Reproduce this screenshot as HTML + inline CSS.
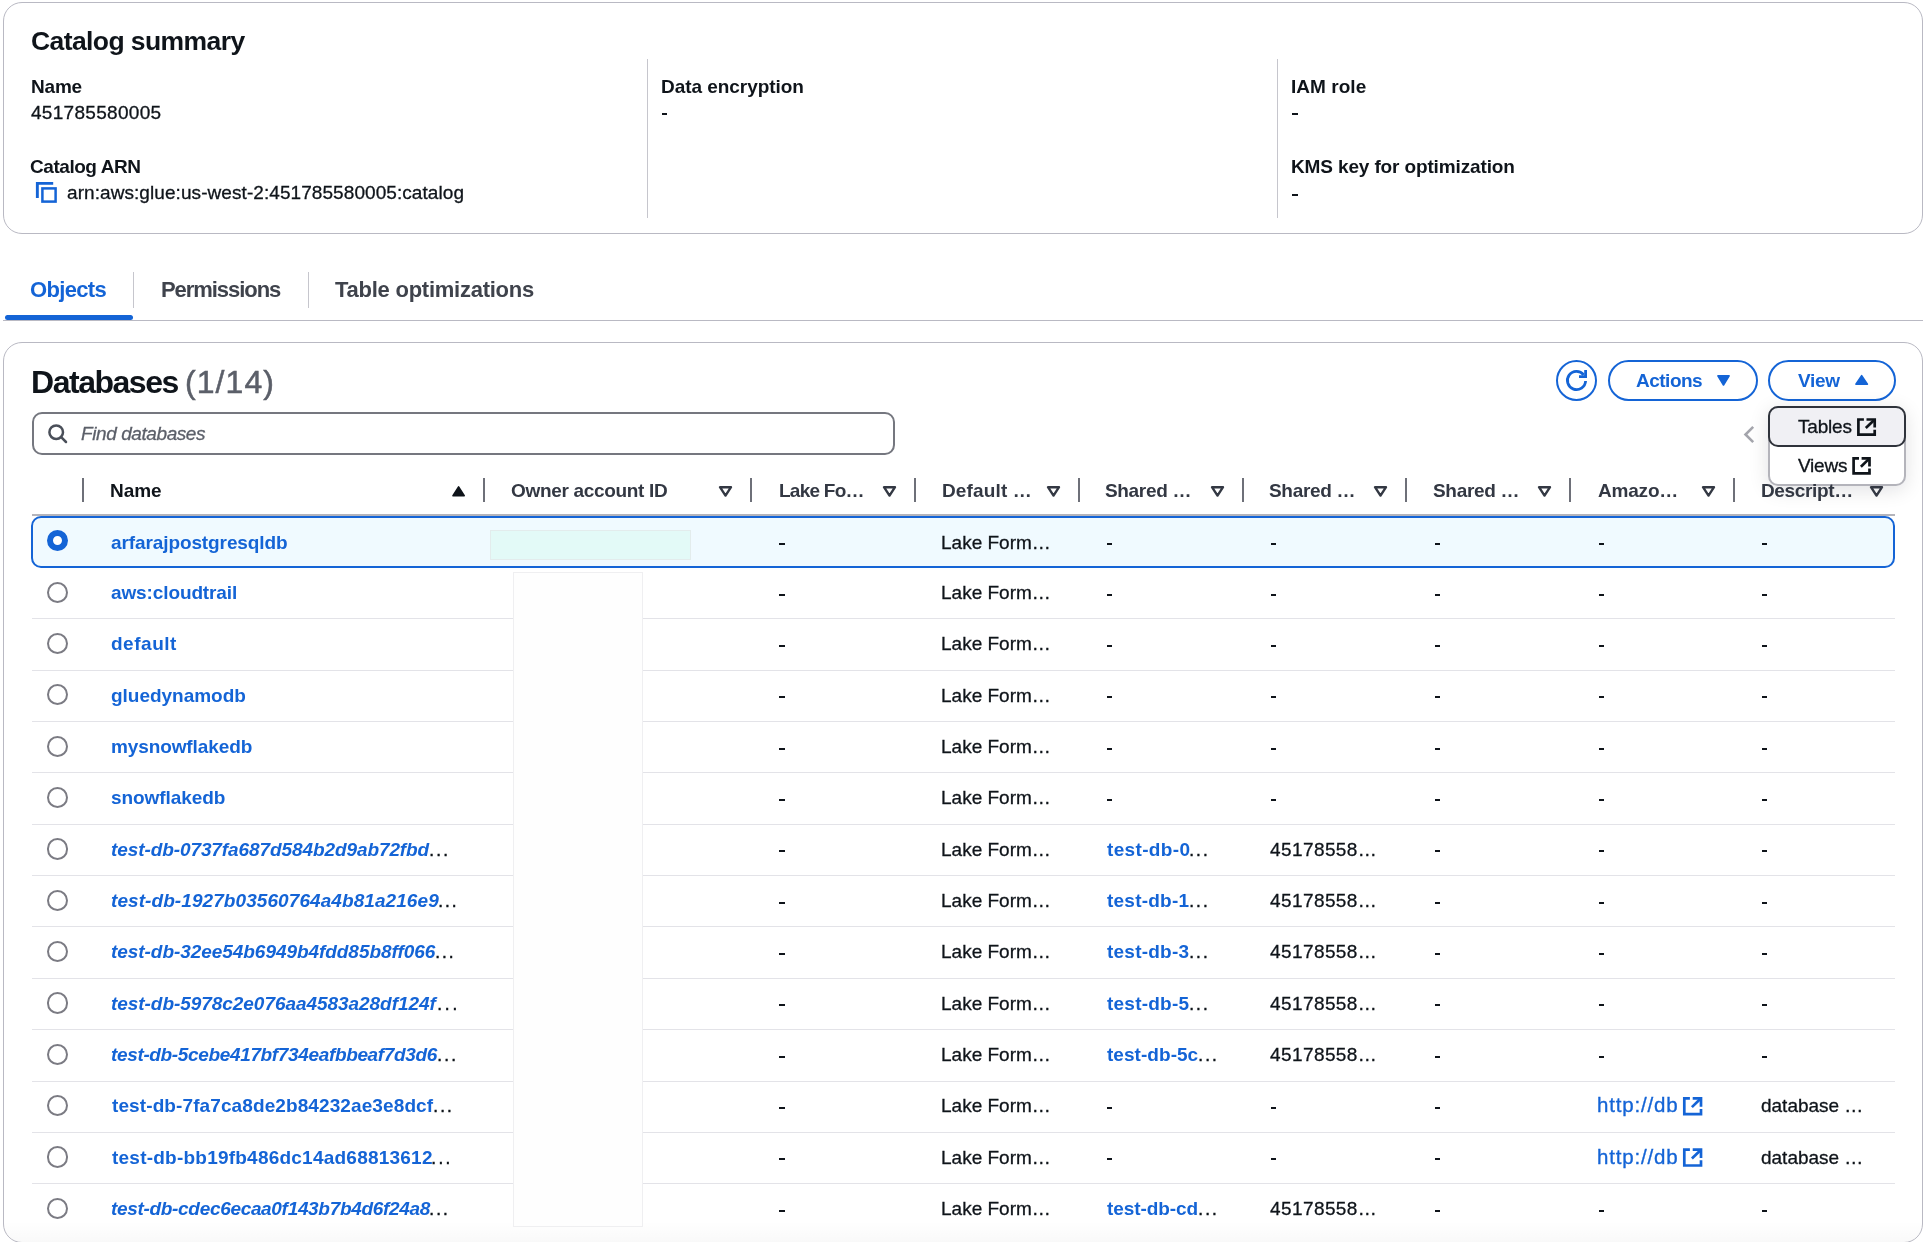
<!DOCTYPE html>
<html><head><meta charset="utf-8"><style>
html,body{margin:0;padding:0;background:#fff;width:1926px;height:1242px;overflow:hidden;position:relative}
span{position:absolute;white-space:pre;font-family:'Liberation Sans', sans-serif;will-change:transform}
</style></head><body>
<div style="position:absolute;left:3px;top:2px;width:1918px;height:230px;border:1px solid #b9b9c3;border-radius:19px"></div>
<div style="position:absolute;left:647px;top:59px;width:1px;height:159px;background:#c6c6cd"></div>
<div style="position:absolute;left:1277px;top:59px;width:1px;height:159px;background:#c6c6cd"></div>
<div style="position:absolute;left:3px;top:320px;width:1920px;height:1px;background:#b9b9c3"></div>
<div style="position:absolute;left:5px;top:314.8px;width:127.7px;height:5px;background:#1464d6;border-radius:3px"></div>
<div style="position:absolute;left:133px;top:272px;width:1px;height:36px;background:#c6c6cd"></div>
<div style="position:absolute;left:308px;top:272px;width:1px;height:36px;background:#c6c6cd"></div>
<div style="position:absolute;left:3px;top:342px;width:1918px;height:899px;border:1px solid #b9b9c3;border-radius:19px"></div>
<div style="position:absolute;left:4px;top:1221px;width:1918px;height:21px;background:linear-gradient(to bottom,rgba(0,0,0,0),rgba(0,0,0,0.022));border-radius:0 0 18px 18px"></div>
<div style="position:absolute;left:1556px;top:360px;width:37px;height:37px;border:2px solid #1464d6;border-radius:50%"></div>
<div style="position:absolute;left:1608px;top:360px;width:146px;height:37px;border:2px solid #1464d6;border-radius:21px"></div>
<div style="position:absolute;left:1768px;top:360px;width:124px;height:37px;border:2px solid #1464d6;border-radius:21px"></div>
<div style="position:absolute;left:31.5px;top:412.1px;width:859.3px;height:38.7px;border:2px solid #75777f;border-radius:10px"></div>
<div style="position:absolute;left:31px;top:516px;width:1860.3px;height:48px;border:2px solid #1464d6;border-radius:10px;background:#f0faff"></div>
<div style="position:absolute;left:32px;top:514px;width:1863px;height:1.5px;background:#b4b4bb"></div>
<div style="position:absolute;left:32px;top:618px;width:1863px;height:1px;background:#e3e3e8"></div>
<div style="position:absolute;left:32px;top:670px;width:1863px;height:1px;background:#e3e3e8"></div>
<div style="position:absolute;left:32px;top:721px;width:1863px;height:1px;background:#e3e3e8"></div>
<div style="position:absolute;left:32px;top:772px;width:1863px;height:1px;background:#e3e3e8"></div>
<div style="position:absolute;left:32px;top:824px;width:1863px;height:1px;background:#e3e3e8"></div>
<div style="position:absolute;left:32px;top:875px;width:1863px;height:1px;background:#e3e3e8"></div>
<div style="position:absolute;left:32px;top:926px;width:1863px;height:1px;background:#e3e3e8"></div>
<div style="position:absolute;left:32px;top:978px;width:1863px;height:1px;background:#e3e3e8"></div>
<div style="position:absolute;left:32px;top:1029px;width:1863px;height:1px;background:#e3e3e8"></div>
<div style="position:absolute;left:32px;top:1081px;width:1863px;height:1px;background:#e3e3e8"></div>
<div style="position:absolute;left:32px;top:1132px;width:1863px;height:1px;background:#e3e3e8"></div>
<div style="position:absolute;left:32px;top:1183px;width:1863px;height:1px;background:#e3e3e8"></div>
<div style="position:absolute;left:47px;top:529.80px;width:9.4px;height:9.4px;border:6px solid #1464d6;border-radius:50%;background:#fff"></div>
<div style="position:absolute;left:46.9px;top:581.50px;width:17.3px;height:17.3px;border:2.1px solid #7b7b83;border-radius:50%"></div>
<div style="position:absolute;left:46.9px;top:632.85px;width:17.3px;height:17.3px;border:2.1px solid #7b7b83;border-radius:50%"></div>
<div style="position:absolute;left:46.9px;top:684.20px;width:17.3px;height:17.3px;border:2.1px solid #7b7b83;border-radius:50%"></div>
<div style="position:absolute;left:46.9px;top:735.55px;width:17.3px;height:17.3px;border:2.1px solid #7b7b83;border-radius:50%"></div>
<div style="position:absolute;left:46.9px;top:786.90px;width:17.3px;height:17.3px;border:2.1px solid #7b7b83;border-radius:50%"></div>
<div style="position:absolute;left:46.9px;top:838.25px;width:17.3px;height:17.3px;border:2.1px solid #7b7b83;border-radius:50%"></div>
<div style="position:absolute;left:46.9px;top:889.60px;width:17.3px;height:17.3px;border:2.1px solid #7b7b83;border-radius:50%"></div>
<div style="position:absolute;left:46.9px;top:940.95px;width:17.3px;height:17.3px;border:2.1px solid #7b7b83;border-radius:50%"></div>
<div style="position:absolute;left:46.9px;top:992.30px;width:17.3px;height:17.3px;border:2.1px solid #7b7b83;border-radius:50%"></div>
<div style="position:absolute;left:46.9px;top:1043.65px;width:17.3px;height:17.3px;border:2.1px solid #7b7b83;border-radius:50%"></div>
<div style="position:absolute;left:46.9px;top:1095.00px;width:17.3px;height:17.3px;border:2.1px solid #7b7b83;border-radius:50%"></div>
<div style="position:absolute;left:46.9px;top:1146.35px;width:17.3px;height:17.3px;border:2.1px solid #7b7b83;border-radius:50%"></div>
<div style="position:absolute;left:46.9px;top:1197.70px;width:17.3px;height:17.3px;border:2.1px solid #7b7b83;border-radius:50%"></div>
<div style="position:absolute;left:82.1px;top:478px;width:2px;height:23.8px;background:#6e7079"></div>
<div style="position:absolute;left:483.0px;top:478px;width:2px;height:23.8px;background:#6e7079"></div>
<div style="position:absolute;left:750.0px;top:478px;width:2px;height:23.8px;background:#6e7079"></div>
<div style="position:absolute;left:914.0px;top:478px;width:2px;height:23.8px;background:#6e7079"></div>
<div style="position:absolute;left:1078.0px;top:478px;width:2px;height:23.8px;background:#6e7079"></div>
<div style="position:absolute;left:1242.0px;top:478px;width:2px;height:23.8px;background:#6e7079"></div>
<div style="position:absolute;left:1405.0px;top:478px;width:2px;height:23.8px;background:#6e7079"></div>
<div style="position:absolute;left:1569.0px;top:478px;width:2px;height:23.8px;background:#6e7079"></div>
<div style="position:absolute;left:1733.0px;top:478px;width:2px;height:23.8px;background:#6e7079"></div>
<div style="position:absolute;left:490.2px;top:529.5px;width:198.5px;height:28.7px;background:#e3faf7;border:1px solid #e3ecec"></div>
<div style="position:absolute;left:512.5px;top:571.5px;width:128.7px;height:653.7px;background:#fefefe;border:1.3px solid #efeff1"></div>
<div style="position:absolute;left:1768.3px;top:406.3px;width:133.3px;height:75.4px;border:2px solid #b4b4bb;border-radius:10px;background:#fff;box-shadow:0 4px 20px rgba(0,7,22,0.12)"></div>
<div style="position:absolute;left:1768.3px;top:406.3px;width:133.3px;height:36.6px;border:2px solid #2f333b;border-radius:10px;background:#f0f0f4"></div>
<div style="position:absolute;left:661.8px;top:113.3px;width:5.6px;height:2px;background:#0f141a"></div>
<div style="position:absolute;left:1292.2px;top:113.3px;width:5.6px;height:2px;background:#0f141a"></div>
<div style="position:absolute;left:1292.2px;top:193.5px;width:5.6px;height:2px;background:#0f141a"></div>
<div style="position:absolute;left:779.3px;top:543.1px;width:5.6px;height:2px;background:#0f141a"></div>
<div style="position:absolute;left:1106.9px;top:543.1px;width:5.6px;height:2px;background:#0f141a"></div>
<div style="position:absolute;left:1270.7px;top:543.1px;width:5.6px;height:2px;background:#0f141a"></div>
<div style="position:absolute;left:1434.7px;top:543.1px;width:5.6px;height:2px;background:#0f141a"></div>
<div style="position:absolute;left:1598.5px;top:543.1px;width:5.6px;height:2px;background:#0f141a"></div>
<div style="position:absolute;left:1761.8px;top:543.1px;width:5.6px;height:2px;background:#0f141a"></div>
<div style="position:absolute;left:779.3px;top:593.5px;width:5.6px;height:2px;background:#0f141a"></div>
<div style="position:absolute;left:1106.9px;top:593.5px;width:5.6px;height:2px;background:#0f141a"></div>
<div style="position:absolute;left:1270.7px;top:593.5px;width:5.6px;height:2px;background:#0f141a"></div>
<div style="position:absolute;left:1434.7px;top:593.5px;width:5.6px;height:2px;background:#0f141a"></div>
<div style="position:absolute;left:1598.5px;top:593.5px;width:5.6px;height:2px;background:#0f141a"></div>
<div style="position:absolute;left:1761.8px;top:593.5px;width:5.6px;height:2px;background:#0f141a"></div>
<div style="position:absolute;left:779.3px;top:644.9px;width:5.6px;height:2px;background:#0f141a"></div>
<div style="position:absolute;left:1106.9px;top:644.9px;width:5.6px;height:2px;background:#0f141a"></div>
<div style="position:absolute;left:1270.7px;top:644.9px;width:5.6px;height:2px;background:#0f141a"></div>
<div style="position:absolute;left:1434.7px;top:644.9px;width:5.6px;height:2px;background:#0f141a"></div>
<div style="position:absolute;left:1598.5px;top:644.9px;width:5.6px;height:2px;background:#0f141a"></div>
<div style="position:absolute;left:1761.8px;top:644.9px;width:5.6px;height:2px;background:#0f141a"></div>
<div style="position:absolute;left:779.3px;top:696.2px;width:5.6px;height:2px;background:#0f141a"></div>
<div style="position:absolute;left:1106.9px;top:696.2px;width:5.6px;height:2px;background:#0f141a"></div>
<div style="position:absolute;left:1270.7px;top:696.2px;width:5.6px;height:2px;background:#0f141a"></div>
<div style="position:absolute;left:1434.7px;top:696.2px;width:5.6px;height:2px;background:#0f141a"></div>
<div style="position:absolute;left:1598.5px;top:696.2px;width:5.6px;height:2px;background:#0f141a"></div>
<div style="position:absolute;left:1761.8px;top:696.2px;width:5.6px;height:2px;background:#0f141a"></div>
<div style="position:absolute;left:779.3px;top:747.6px;width:5.6px;height:2px;background:#0f141a"></div>
<div style="position:absolute;left:1106.9px;top:747.6px;width:5.6px;height:2px;background:#0f141a"></div>
<div style="position:absolute;left:1270.7px;top:747.6px;width:5.6px;height:2px;background:#0f141a"></div>
<div style="position:absolute;left:1434.7px;top:747.6px;width:5.6px;height:2px;background:#0f141a"></div>
<div style="position:absolute;left:1598.5px;top:747.6px;width:5.6px;height:2px;background:#0f141a"></div>
<div style="position:absolute;left:1761.8px;top:747.6px;width:5.6px;height:2px;background:#0f141a"></div>
<div style="position:absolute;left:779.3px;top:799.0px;width:5.6px;height:2px;background:#0f141a"></div>
<div style="position:absolute;left:1106.9px;top:799.0px;width:5.6px;height:2px;background:#0f141a"></div>
<div style="position:absolute;left:1270.7px;top:799.0px;width:5.6px;height:2px;background:#0f141a"></div>
<div style="position:absolute;left:1434.7px;top:799.0px;width:5.6px;height:2px;background:#0f141a"></div>
<div style="position:absolute;left:1598.5px;top:799.0px;width:5.6px;height:2px;background:#0f141a"></div>
<div style="position:absolute;left:1761.8px;top:799.0px;width:5.6px;height:2px;background:#0f141a"></div>
<div style="position:absolute;left:779.3px;top:850.3px;width:5.6px;height:2px;background:#0f141a"></div>
<div style="position:absolute;left:1434.7px;top:850.3px;width:5.6px;height:2px;background:#0f141a"></div>
<div style="position:absolute;left:1598.5px;top:850.3px;width:5.6px;height:2px;background:#0f141a"></div>
<div style="position:absolute;left:1761.8px;top:850.3px;width:5.6px;height:2px;background:#0f141a"></div>
<div style="position:absolute;left:779.3px;top:901.6px;width:5.6px;height:2px;background:#0f141a"></div>
<div style="position:absolute;left:1434.7px;top:901.6px;width:5.6px;height:2px;background:#0f141a"></div>
<div style="position:absolute;left:1598.5px;top:901.6px;width:5.6px;height:2px;background:#0f141a"></div>
<div style="position:absolute;left:1761.8px;top:901.6px;width:5.6px;height:2px;background:#0f141a"></div>
<div style="position:absolute;left:779.3px;top:953.0px;width:5.6px;height:2px;background:#0f141a"></div>
<div style="position:absolute;left:1434.7px;top:953.0px;width:5.6px;height:2px;background:#0f141a"></div>
<div style="position:absolute;left:1598.5px;top:953.0px;width:5.6px;height:2px;background:#0f141a"></div>
<div style="position:absolute;left:1761.8px;top:953.0px;width:5.6px;height:2px;background:#0f141a"></div>
<div style="position:absolute;left:779.3px;top:1004.3px;width:5.6px;height:2px;background:#0f141a"></div>
<div style="position:absolute;left:1434.7px;top:1004.3px;width:5.6px;height:2px;background:#0f141a"></div>
<div style="position:absolute;left:1598.5px;top:1004.3px;width:5.6px;height:2px;background:#0f141a"></div>
<div style="position:absolute;left:1761.8px;top:1004.3px;width:5.6px;height:2px;background:#0f141a"></div>
<div style="position:absolute;left:779.3px;top:1055.7px;width:5.6px;height:2px;background:#0f141a"></div>
<div style="position:absolute;left:1434.7px;top:1055.7px;width:5.6px;height:2px;background:#0f141a"></div>
<div style="position:absolute;left:1598.5px;top:1055.7px;width:5.6px;height:2px;background:#0f141a"></div>
<div style="position:absolute;left:1761.8px;top:1055.7px;width:5.6px;height:2px;background:#0f141a"></div>
<div style="position:absolute;left:779.3px;top:1107.0px;width:5.6px;height:2px;background:#0f141a"></div>
<div style="position:absolute;left:1106.9px;top:1107.0px;width:5.6px;height:2px;background:#0f141a"></div>
<div style="position:absolute;left:1270.7px;top:1107.0px;width:5.6px;height:2px;background:#0f141a"></div>
<div style="position:absolute;left:1434.7px;top:1107.0px;width:5.6px;height:2px;background:#0f141a"></div>
<div style="position:absolute;left:779.3px;top:1158.4px;width:5.6px;height:2px;background:#0f141a"></div>
<div style="position:absolute;left:1106.9px;top:1158.4px;width:5.6px;height:2px;background:#0f141a"></div>
<div style="position:absolute;left:1270.7px;top:1158.4px;width:5.6px;height:2px;background:#0f141a"></div>
<div style="position:absolute;left:1434.7px;top:1158.4px;width:5.6px;height:2px;background:#0f141a"></div>
<div style="position:absolute;left:779.3px;top:1209.8px;width:5.6px;height:2px;background:#0f141a"></div>
<div style="position:absolute;left:1434.7px;top:1209.8px;width:5.6px;height:2px;background:#0f141a"></div>
<div style="position:absolute;left:1598.5px;top:1209.8px;width:5.6px;height:2px;background:#0f141a"></div>
<div style="position:absolute;left:1761.8px;top:1209.8px;width:5.6px;height:2px;background:#0f141a"></div>
<svg style="position:absolute;left:0;top:0" width="1926" height="1242">
<path d="M37.35 197.9V183.35H53.2" fill="none" stroke="#1464d6" stroke-width="2.9"/>
<rect x="42.4" y="188.4" width="13.2" height="13.2" fill="none" stroke="#1464d6" stroke-width="2.5"/>
<path d="M1585.6 381 A9.1 9.1 0 1 1 1583.7 374.9" fill="none" stroke="#1464d6" stroke-width="2.8"/>
<path d="M1585.6 369.9V376.6H1579" fill="none" stroke="#1464d6" stroke-width="2.8"/>
<path d="M1717.9 375.9H1729.1L1723.5 385Z" fill="#1464d6" stroke="#1464d6" stroke-width="1.6" stroke-linejoin="round"/>
<path d="M1855.9 384.2H1867.4L1861.65 375.7Z" fill="#1464d6" stroke="#1464d6" stroke-width="1.6" stroke-linejoin="round"/>
<circle cx="56.2" cy="432.2" r="6.8" fill="none" stroke="#4a4f59" stroke-width="2.5"/>
<path d="M61.2 437.2L66 442" fill="none" stroke="#4a4f59" stroke-width="2.5" stroke-linecap="round"/>
<path d="M1753.2 426.8L1745.5 434.5L1753.2 442.2" fill="none" stroke="#a4a5ac" stroke-width="2.6"/>
<path d="M453 495.8H464.2L458.6 486.9Z" fill="#0f141a" stroke="#0f141a" stroke-width="1.6" stroke-linejoin="round"/>
<path d="M720.0 487.2H731.0L725.5 495.6Z" fill="none" stroke="#333843" stroke-width="2.4" stroke-linejoin="round"/>
<path d="M884.0 487.2H895.0L889.5 495.6Z" fill="none" stroke="#333843" stroke-width="2.4" stroke-linejoin="round"/>
<path d="M1048.0 487.2H1059.0L1053.5 495.6Z" fill="none" stroke="#333843" stroke-width="2.4" stroke-linejoin="round"/>
<path d="M1212.0 487.2H1223.0L1217.5 495.6Z" fill="none" stroke="#333843" stroke-width="2.4" stroke-linejoin="round"/>
<path d="M1375.0 487.2H1386.0L1380.5 495.6Z" fill="none" stroke="#333843" stroke-width="2.4" stroke-linejoin="round"/>
<path d="M1539.0 487.2H1550.0L1544.5 495.6Z" fill="none" stroke="#333843" stroke-width="2.4" stroke-linejoin="round"/>
<path d="M1703.0 487.2H1714.0L1708.5 495.6Z" fill="none" stroke="#333843" stroke-width="2.4" stroke-linejoin="round"/>
<path d="M1871.0 487.2H1882.0L1876.5 495.6Z" fill="none" stroke="#333843" stroke-width="2.4" stroke-linejoin="round"/>
<path d="M1863.9 419.5H1858.4V434.6H1874.7V429.7" fill="none" stroke="#0f141a" stroke-width="2.7"/><path d="M1866.5 419.5H1874.7V427.5" fill="none" stroke="#0f141a" stroke-width="2.7"/><path d="M1874.2 420.0L1865.8 427.9" fill="none" stroke="#0f141a" stroke-width="2.7"/>
<path d="M1859.0 458.4H1853.6V473.3H1869.5V468.5" fill="none" stroke="#0f141a" stroke-width="2.7"/><path d="M1861.6 458.4H1869.5V466.4" fill="none" stroke="#0f141a" stroke-width="2.7"/><path d="M1869.0 458.9L1860.9 466.7" fill="none" stroke="#0f141a" stroke-width="2.7"/>
<path d="M1689.9 1098.3H1684.3V1114.1H1701.0V1109.0" fill="none" stroke="#1464d6" stroke-width="2.7"/><path d="M1692.7 1098.3H1701.0V1106.8" fill="none" stroke="#1464d6" stroke-width="2.7"/><path d="M1700.5 1098.8L1691.9 1107.1" fill="none" stroke="#1464d6" stroke-width="2.7"/>
<path d="M1689.9 1149.7H1684.3V1165.5H1701.0V1160.3" fill="none" stroke="#1464d6" stroke-width="2.7"/><path d="M1692.7 1149.7H1701.0V1158.1" fill="none" stroke="#1464d6" stroke-width="2.7"/><path d="M1700.5 1150.2L1691.9 1158.5" fill="none" stroke="#1464d6" stroke-width="2.7"/>
</svg>
<span id="t0" style="left:31.40px;top:28.47px;font-size:26.5px;line-height:26.5px;font-weight:700;font-style:normal;color:#0f141a;letter-spacing:-0.586px">Catalog summary</span>
<span id="t1" style="left:30.80px;top:76.82px;font-size:19px;line-height:19px;font-weight:700;font-style:normal;color:#0f141a;letter-spacing:-0.200px">Name</span>
<span id="t2" style="left:31.00px;top:102.72px;font-size:19px;line-height:19px;font-weight:400;font-style:normal;color:#0f141a;letter-spacing:0.300px;-webkit-text-stroke:0.30px #0f141a">451785580005</span>
<span id="t3" style="left:30.00px;top:156.82px;font-size:19px;line-height:19px;font-weight:700;font-style:normal;color:#0f141a;letter-spacing:-0.450px">Catalog ARN</span>
<span id="t4" style="left:67.40px;top:182.92px;font-size:19px;line-height:19px;font-weight:400;font-style:normal;color:#0f141a;letter-spacing:0.071px;-webkit-text-stroke:0.30px #0f141a">arn:aws:glue:us-west-2:451785580005:catalog</span>
<span id="t5" style="left:660.60px;top:76.82px;font-size:19px;line-height:19px;font-weight:700;font-style:normal;color:#0f141a;letter-spacing:-0.050px">Data encryption</span>
<span id="t6" style="left:1291.40px;top:76.82px;font-size:19px;line-height:19px;font-weight:700;font-style:normal;color:#0f141a;letter-spacing:0.043px">IAM role</span>
<span id="t7" style="left:1291.40px;top:156.82px;font-size:19px;line-height:19px;font-weight:700;font-style:normal;color:#0f141a;letter-spacing:-0.135px">KMS key for optimization</span>
<span id="t8" style="left:30.00px;top:279.18px;font-size:22px;line-height:22px;font-weight:700;font-style:normal;color:#1464d6;letter-spacing:-0.667px">Objects</span>
<span id="t9" style="left:161.00px;top:279.18px;font-size:22px;line-height:22px;font-weight:700;font-style:normal;color:#3f434c;letter-spacing:-1.060px">Permissions</span>
<span id="t10" style="left:335.00px;top:279.18px;font-size:22px;line-height:22px;font-weight:700;font-style:normal;color:#3f434c;letter-spacing:-0.250px">Table optimizations</span>
<span id="t11" style="left:31.00px;top:365.81px;font-size:32px;line-height:32px;font-weight:700;font-style:normal;color:#0f141a;letter-spacing:-1.475px">Databases</span>
<span id="t12" style="left:185.00px;top:365.81px;font-size:32px;line-height:32px;font-weight:400;font-style:normal;color:#5b5f69;letter-spacing:1.080px;-webkit-text-stroke:0.51px #5b5f69">(1/14)</span>
<span id="t13" style="left:80.80px;top:423.92px;font-size:19px;line-height:19px;font-weight:400;font-style:italic;color:#5b5f69;letter-spacing:-0.415px;-webkit-text-stroke:0.30px #5b5f69">Find databases</span>
<span id="t14" style="left:1635.80px;top:371.12px;font-size:19px;line-height:19px;font-weight:700;font-style:normal;color:#1464d6;letter-spacing:-0.500px">Actions</span>
<span id="t15" style="left:1797.80px;top:371.02px;font-size:19px;line-height:19px;font-weight:700;font-style:normal;color:#1464d6;letter-spacing:-0.267px">View</span>
<span id="t16" style="left:1797.80px;top:416.72px;font-size:19px;line-height:19px;font-weight:400;font-style:normal;color:#0f141a;letter-spacing:-0.200px;-webkit-text-stroke:0.30px #0f141a">Tables</span>
<span id="t17" style="left:1797.80px;top:455.62px;font-size:19px;line-height:19px;font-weight:400;font-style:normal;color:#0f141a;letter-spacing:-0.225px;-webkit-text-stroke:0.30px #0f141a">Views</span>
<span id="t18" style="left:110.20px;top:480.92px;font-size:19px;line-height:19px;font-weight:700;font-style:normal;color:#0f141a;letter-spacing:-0.033px">Name</span>
<span id="t19" style="left:511.20px;top:480.92px;font-size:19px;line-height:19px;font-weight:700;font-style:normal;color:#333843;letter-spacing:-0.320px">Owner account ID</span>
<span id="t20" style="left:779.00px;top:480.92px;font-size:19px;line-height:19px;font-weight:700;font-style:normal;color:#333843;letter-spacing:-0.743px">Lake Fo…</span>
<span id="t21" style="left:942.00px;top:480.92px;font-size:19px;line-height:19px;font-weight:700;font-style:normal;color:#333843;letter-spacing:0.150px">Default …</span>
<span id="t22" style="left:1105.20px;top:480.92px;font-size:19px;line-height:19px;font-weight:700;font-style:normal;color:#333843;letter-spacing:-0.329px">Shared …</span>
<span id="t23" style="left:1269.40px;top:480.92px;font-size:19px;line-height:19px;font-weight:700;font-style:normal;color:#333843;letter-spacing:-0.314px">Shared …</span>
<span id="t24" style="left:1433.00px;top:480.92px;font-size:19px;line-height:19px;font-weight:700;font-style:normal;color:#333843;letter-spacing:-0.314px">Shared …</span>
<span id="t25" style="left:1597.80px;top:480.92px;font-size:19px;line-height:19px;font-weight:700;font-style:normal;color:#333843;letter-spacing:-0.200px">Amazo…</span>
<span id="t26" style="left:1761.00px;top:480.92px;font-size:19px;line-height:19px;font-weight:700;font-style:normal;color:#333843;letter-spacing:-0.350px">Descript…</span>
<span id="t27" style="left:110.60px;top:532.52px;font-size:19px;line-height:19px;font-weight:700;font-style:normal;color:#1464d6;letter-spacing:-0.100px">arfarajpostgresqldb</span>
<span id="t28" style="left:940.60px;top:532.52px;font-size:19px;line-height:19px;font-weight:400;font-style:normal;color:#0f141a;letter-spacing:0.000px;-webkit-text-stroke:0.30px #0f141a">Lake Form…</span>
<span id="t29" style="left:110.60px;top:582.97px;font-size:19px;line-height:19px;font-weight:700;font-style:normal;color:#1464d6;letter-spacing:-0.115px">aws:cloudtrail</span>
<span id="t30" style="left:940.60px;top:582.97px;font-size:19px;line-height:19px;font-weight:400;font-style:normal;color:#0f141a;letter-spacing:0.000px;-webkit-text-stroke:0.30px #0f141a">Lake Form…</span>
<span id="t31" style="left:110.60px;top:634.32px;font-size:19px;line-height:19px;font-weight:700;font-style:normal;color:#1464d6;letter-spacing:0.517px">default</span>
<span id="t32" style="left:940.60px;top:634.32px;font-size:19px;line-height:19px;font-weight:400;font-style:normal;color:#0f141a;letter-spacing:0.000px;-webkit-text-stroke:0.30px #0f141a">Lake Form…</span>
<span id="t33" style="left:110.60px;top:685.67px;font-size:19px;line-height:19px;font-weight:700;font-style:normal;color:#1464d6;letter-spacing:-0.027px">gluedynamodb</span>
<span id="t34" style="left:940.60px;top:685.67px;font-size:19px;line-height:19px;font-weight:400;font-style:normal;color:#0f141a;letter-spacing:0.000px;-webkit-text-stroke:0.30px #0f141a">Lake Form…</span>
<span id="t35" style="left:110.60px;top:737.02px;font-size:19px;line-height:19px;font-weight:700;font-style:normal;color:#1464d6;letter-spacing:-0.108px">mysnowflakedb</span>
<span id="t36" style="left:940.60px;top:737.02px;font-size:19px;line-height:19px;font-weight:400;font-style:normal;color:#0f141a;letter-spacing:0.000px;-webkit-text-stroke:0.30px #0f141a">Lake Form…</span>
<span id="t37" style="left:110.60px;top:788.37px;font-size:19px;line-height:19px;font-weight:700;font-style:normal;color:#1464d6;letter-spacing:-0.060px">snowflakedb</span>
<span id="t38" style="left:940.60px;top:788.37px;font-size:19px;line-height:19px;font-weight:400;font-style:normal;color:#0f141a;letter-spacing:0.000px;-webkit-text-stroke:0.30px #0f141a">Lake Form…</span>
<span id="t39" style="left:110.60px;top:839.72px;font-size:19px;line-height:19px;font-weight:700;font-style:italic;color:#1464d6;letter-spacing:-0.090px">test-db-0737fa687d584b2d9ab72fbd</span>
<span id="t40" style="left:429.00px;top:839.72px;font-size:19px;line-height:19px;font-weight:400;font-style:normal;color:#0f141a;letter-spacing:1.750px;-webkit-text-stroke:0.30px #0f141a">...</span>
<span id="t41" style="left:940.60px;top:839.72px;font-size:19px;line-height:19px;font-weight:400;font-style:normal;color:#0f141a;letter-spacing:0.000px;-webkit-text-stroke:0.30px #0f141a">Lake Form…</span>
<span id="t42" style="left:1106.80px;top:839.72px;font-size:19px;line-height:19px;font-weight:700;font-style:normal;color:#1464d6;letter-spacing:0.350px">test-db-0</span>
<span id="t43" style="left:1189.40px;top:839.72px;font-size:19px;line-height:19px;font-weight:400;font-style:normal;color:#0f141a;letter-spacing:1.550px;-webkit-text-stroke:0.30px #0f141a">...</span>
<span id="t44" style="left:1270.40px;top:839.72px;font-size:19px;line-height:19px;font-weight:400;font-style:normal;color:#0f141a;letter-spacing:0.412px;-webkit-text-stroke:0.30px #0f141a">45178558…</span>
<span id="t45" style="left:110.60px;top:891.07px;font-size:19px;line-height:19px;font-weight:700;font-style:italic;color:#1464d6;letter-spacing:0.077px">test-db-1927b03560764a4b81a216e9</span>
<span id="t46" style="left:438.40px;top:891.07px;font-size:19px;line-height:19px;font-weight:400;font-style:normal;color:#0f141a;letter-spacing:1.500px;-webkit-text-stroke:0.30px #0f141a">...</span>
<span id="t47" style="left:940.60px;top:891.07px;font-size:19px;line-height:19px;font-weight:400;font-style:normal;color:#0f141a;letter-spacing:0.000px;-webkit-text-stroke:0.30px #0f141a">Lake Form…</span>
<span id="t48" style="left:1106.80px;top:891.07px;font-size:19px;line-height:19px;font-weight:700;font-style:normal;color:#1464d6;letter-spacing:0.225px">test-db-1</span>
<span id="t49" style="left:1189.40px;top:891.07px;font-size:19px;line-height:19px;font-weight:400;font-style:normal;color:#0f141a;letter-spacing:1.550px;-webkit-text-stroke:0.30px #0f141a">...</span>
<span id="t50" style="left:1270.40px;top:891.07px;font-size:19px;line-height:19px;font-weight:400;font-style:normal;color:#0f141a;letter-spacing:0.412px;-webkit-text-stroke:0.30px #0f141a">45178558…</span>
<span id="t51" style="left:110.60px;top:942.42px;font-size:19px;line-height:19px;font-weight:700;font-style:italic;color:#1464d6;letter-spacing:-0.053px">test-db-32ee54b6949b4fdd85b8ff066</span>
<span id="t52" style="left:435.20px;top:942.42px;font-size:19px;line-height:19px;font-weight:400;font-style:normal;color:#0f141a;letter-spacing:1.450px;-webkit-text-stroke:0.30px #0f141a">...</span>
<span id="t53" style="left:940.60px;top:942.42px;font-size:19px;line-height:19px;font-weight:400;font-style:normal;color:#0f141a;letter-spacing:0.000px;-webkit-text-stroke:0.30px #0f141a">Lake Form…</span>
<span id="t54" style="left:1106.80px;top:942.42px;font-size:19px;line-height:19px;font-weight:700;font-style:normal;color:#1464d6;letter-spacing:0.225px">test-db-3</span>
<span id="t55" style="left:1189.40px;top:942.42px;font-size:19px;line-height:19px;font-weight:400;font-style:normal;color:#0f141a;letter-spacing:1.550px;-webkit-text-stroke:0.30px #0f141a">...</span>
<span id="t56" style="left:1270.40px;top:942.42px;font-size:19px;line-height:19px;font-weight:400;font-style:normal;color:#0f141a;letter-spacing:0.412px;-webkit-text-stroke:0.30px #0f141a">45178558…</span>
<span id="t57" style="left:110.60px;top:993.77px;font-size:19px;line-height:19px;font-weight:700;font-style:italic;color:#1464d6;letter-spacing:-0.050px">test-db-5978c2e076aa4583a28df124f</span>
<span id="t58" style="left:437.40px;top:993.77px;font-size:19px;line-height:19px;font-weight:400;font-style:normal;color:#0f141a;letter-spacing:2.300px;-webkit-text-stroke:0.30px #0f141a">...</span>
<span id="t59" style="left:940.60px;top:993.77px;font-size:19px;line-height:19px;font-weight:400;font-style:normal;color:#0f141a;letter-spacing:0.000px;-webkit-text-stroke:0.30px #0f141a">Lake Form…</span>
<span id="t60" style="left:1106.80px;top:993.77px;font-size:19px;line-height:19px;font-weight:700;font-style:normal;color:#1464d6;letter-spacing:0.225px">test-db-5</span>
<span id="t61" style="left:1189.40px;top:993.77px;font-size:19px;line-height:19px;font-weight:400;font-style:normal;color:#0f141a;letter-spacing:1.550px;-webkit-text-stroke:0.30px #0f141a">...</span>
<span id="t62" style="left:1270.40px;top:993.77px;font-size:19px;line-height:19px;font-weight:400;font-style:normal;color:#0f141a;letter-spacing:0.412px;-webkit-text-stroke:0.30px #0f141a">45178558…</span>
<span id="t63" style="left:110.60px;top:1045.12px;font-size:19px;line-height:19px;font-weight:700;font-style:italic;color:#1464d6;letter-spacing:-0.352px">test-db-5cebe417bf734eafbbeaf7d3d6</span>
<span id="t64" style="left:437.40px;top:1045.12px;font-size:19px;line-height:19px;font-weight:400;font-style:normal;color:#0f141a;letter-spacing:1.750px;-webkit-text-stroke:0.30px #0f141a">...</span>
<span id="t65" style="left:940.60px;top:1045.12px;font-size:19px;line-height:19px;font-weight:400;font-style:normal;color:#0f141a;letter-spacing:0.000px;-webkit-text-stroke:0.30px #0f141a">Lake Form…</span>
<span id="t66" style="left:1106.80px;top:1045.12px;font-size:19px;line-height:19px;font-weight:700;font-style:normal;color:#1464d6;letter-spacing:0.044px">test-db-5c</span>
<span id="t67" style="left:1197.60px;top:1045.12px;font-size:19px;line-height:19px;font-weight:400;font-style:normal;color:#0f141a;letter-spacing:1.650px;-webkit-text-stroke:0.30px #0f141a">...</span>
<span id="t68" style="left:1270.40px;top:1045.12px;font-size:19px;line-height:19px;font-weight:400;font-style:normal;color:#0f141a;letter-spacing:0.412px;-webkit-text-stroke:0.30px #0f141a">45178558…</span>
<span id="t69" style="left:111.60px;top:1096.47px;font-size:19px;line-height:19px;font-weight:700;font-style:normal;color:#1464d6;letter-spacing:0.103px">test-db-7fa7ca8de2b84232ae3e8dcf</span>
<span id="t70" style="left:433.00px;top:1096.47px;font-size:19px;line-height:19px;font-weight:400;font-style:normal;color:#0f141a;letter-spacing:1.600px;-webkit-text-stroke:0.30px #0f141a">...</span>
<span id="t71" style="left:940.60px;top:1096.47px;font-size:19px;line-height:19px;font-weight:400;font-style:normal;color:#0f141a;letter-spacing:0.000px;-webkit-text-stroke:0.30px #0f141a">Lake Form…</span>
<span id="t72" style="left:1597.00px;top:1095.20px;font-size:20.5px;line-height:20.5px;font-weight:400;font-style:normal;color:#1464d6;letter-spacing:0.812px;-webkit-text-stroke:0.33px #1464d6">http://db</span>
<span id="t73" style="left:1760.60px;top:1096.47px;font-size:19px;line-height:19px;font-weight:400;font-style:normal;color:#0f141a;letter-spacing:-0.011px;-webkit-text-stroke:0.30px #0f141a">database …</span>
<span id="t74" style="left:111.60px;top:1147.82px;font-size:19px;line-height:19px;font-weight:700;font-style:normal;color:#1464d6;letter-spacing:0.227px">test-db-bb19fb486dc14ad68813612</span>
<span id="t75" style="left:431.20px;top:1147.82px;font-size:19px;line-height:19px;font-weight:400;font-style:normal;color:#0f141a;letter-spacing:1.850px;-webkit-text-stroke:0.30px #0f141a">...</span>
<span id="t76" style="left:940.60px;top:1147.82px;font-size:19px;line-height:19px;font-weight:400;font-style:normal;color:#0f141a;letter-spacing:0.000px;-webkit-text-stroke:0.30px #0f141a">Lake Form…</span>
<span id="t77" style="left:1597.00px;top:1146.55px;font-size:20.5px;line-height:20.5px;font-weight:400;font-style:normal;color:#1464d6;letter-spacing:0.812px;-webkit-text-stroke:0.33px #1464d6">http://db</span>
<span id="t78" style="left:1760.60px;top:1147.82px;font-size:19px;line-height:19px;font-weight:400;font-style:normal;color:#0f141a;letter-spacing:-0.011px;-webkit-text-stroke:0.30px #0f141a">database …</span>
<span id="t79" style="left:110.60px;top:1199.17px;font-size:19px;line-height:19px;font-weight:700;font-style:italic;color:#1464d6;letter-spacing:-0.319px">test-db-cdec6ecaa0f143b7b4d6f24a8</span>
<span id="t80" style="left:429.20px;top:1199.17px;font-size:19px;line-height:19px;font-weight:400;font-style:normal;color:#0f141a;letter-spacing:1.650px;-webkit-text-stroke:0.30px #0f141a">...</span>
<span id="t81" style="left:940.60px;top:1199.17px;font-size:19px;line-height:19px;font-weight:400;font-style:normal;color:#0f141a;letter-spacing:0.000px;-webkit-text-stroke:0.30px #0f141a">Lake Form…</span>
<span id="t82" style="left:1106.80px;top:1199.17px;font-size:19px;line-height:19px;font-weight:700;font-style:normal;color:#1464d6;letter-spacing:-0.067px">test-db-cd</span>
<span id="t83" style="left:1197.60px;top:1199.17px;font-size:19px;line-height:19px;font-weight:400;font-style:normal;color:#0f141a;letter-spacing:1.650px;-webkit-text-stroke:0.30px #0f141a">...</span>
<span id="t84" style="left:1270.40px;top:1199.17px;font-size:19px;line-height:19px;font-weight:400;font-style:normal;color:#0f141a;letter-spacing:0.412px;-webkit-text-stroke:0.30px #0f141a">45178558…</span>
</body></html>
